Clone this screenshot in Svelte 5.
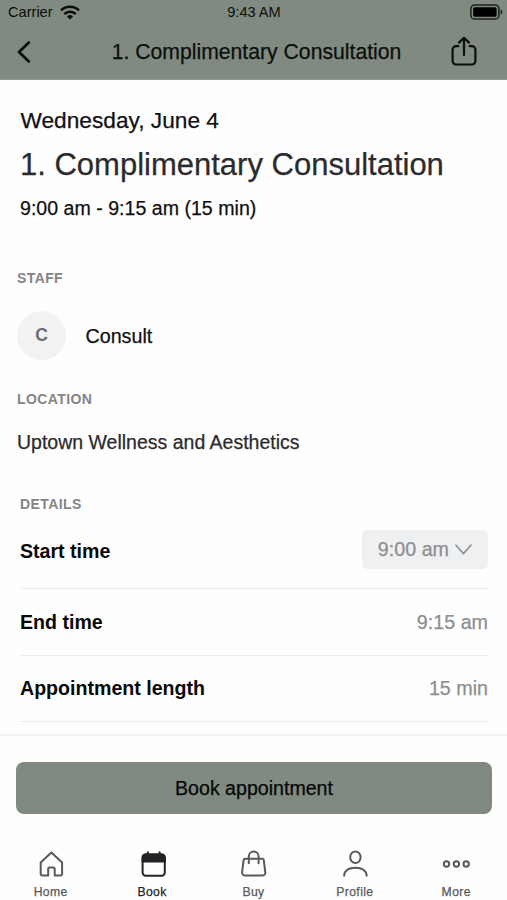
<script lang="ts">
  interface Tab {
    id: string;
    label: string;
  }

  const service = '1. Complimentary Consultation';

  const tabs: Tab[] = [
    { id: 'home', label: 'Home' },
    { id: 'book', label: 'Book' },
    { id: 'buy', label: 'Buy' },
    { id: 'profile', label: 'Profile' },
    { id: 'more', label: 'More' }
  ];

  let active = $state('book');
</script>

<div class="screen">
  <header>
    <div class="status">
      <div class="carrier">
        <span>Carrier</span>
        <svg width="20" height="15" viewBox="0 0 20 15" fill="none" stroke="#0b0f0b" stroke-width="2.5">
          <path d="M1 5.3a13 13 0 0 1 18 0"/><path d="M4.3 9a8.3 8.3 0 0 1 11.4 0"/>
          <path d="M10 14.4 7 11.5a4.3 4.3 0 0 1 6 0Z" fill="#0b0f0b" stroke="none"/>
        </svg>
      </div>
      <span class="clock">9:43 AM</span>
      <svg class="battery" width="33" height="16" viewBox="0 0 33 16" fill="none">
        <rect x="0.9" y="0.9" width="28" height="14.2" rx="3.6" stroke="#1c211c" stroke-width="1.5"/>
        <rect x="3.2" y="3.2" width="23.4" height="9.6" rx="1.6" fill="#000"/>
        <path d="M30.6 5.4c2.3.7 2.3 4.5 0 5.2Z" fill="#1c211c"/>
      </svg>
    </div>
    <div class="nav">
      <button class="icon-btn" aria-label="Back">
        <svg width="16" height="24" viewBox="0 0 16 24" fill="none" stroke="#0b0f0b" stroke-width="2.8" stroke-linecap="round" stroke-linejoin="round">
          <path d="M12.8 2.4 3 12l9.800 9.400"/>
        </svg>
      </button>
      <h1>{service}</h1>
      <button class="icon-btn" aria-label="Share">
        <svg width="28" height="31" viewBox="0 0 28 31" fill="none" stroke="#0b0f0b" stroke-width="2.2" stroke-linecap="round" stroke-linejoin="round">
          <path d="M8.3 10.2H6A3.4 3.4 0 0 0 2.6 13.6v11.5A3.4 3.4 0 0 0 6 28.5h16a3.4 3.4 0 0 0 3.4-3.4V13.6A3.4 3.4 0 0 0 22 10.2h-2.3"/>
          <path d="M14 19V2M9 6.6 14 1.8l5 4.8"/>
        </svg>
      </button>
    </div>
  </header>

  <main>
    <p class="date">Wednesday, June 4</p>
    <h2>{service}</h2>
    <p class="time">9:00 am - 9:15 am (15 min)</p>

    <h3 class="staff-label">STAFF</h3>
    <div class="staff">
      <span class="avatar">C</span>
      <span class="name">Consult</span>
    </div>

    <h3 class="location-label">LOCATION</h3>
    <p class="location">Uptown Wellness and Aesthetics</p>

    <h3 class="details-label">DETAILS</h3>
    <div class="details">
      <div class="row first">
        <span class="key">Start time</span>
        <button class="picker">
          <span>9:00 am</span>
          <svg width="17" height="11" viewBox="0 0 17 11" fill="none" stroke="#8d8f90" stroke-width="1.6" stroke-linecap="round" stroke-linejoin="round">
            <path d="M1 1.2 8.4 9.6 16 1.2"/>
          </svg>
        </button>
      </div>
      <div class="row">
        <span class="key">End time</span>
        <span class="value">9:15 am</span>
      </div>
      <div class="row last">
        <span class="key">Appointment length</span>
        <span class="value">15 min</span>
      </div>
    </div>
  </main>

  <footer>
    <button class="book">Book appointment</button>
    <nav class="tabs">
      {#each tabs as tab}
        <button class="tab" class:active={active === tab.id} onclick={() => (active = tab.id)}>
          <svg width="30" height="30" viewBox="0 0 30 30" fill="none" stroke="currentColor" stroke-width="2" stroke-linecap="round" stroke-linejoin="round">
            {#if tab.id === 'home'}
              <path d="M4.7 13.5 15.400 3.600l10.700 9.900V25a1.500 1.500 0 0 1-1.500 1.500H18.700V19.700a1.200 1.200 0 0 0-1.200-1.200H13.400a1.200 1.200 0 0 0-1.200 1.200V26.500H6.200a1.500 1.500 0 0 1-1.500-1.500Z"/>
            {:else if tab.id === 'book'}
              <rect x="5.600" y="5.500" width="22.200" height="21.200" rx="3.200"/>
              <path d="M5.600 12.500V8.500a3 3 0 0 1 3-3h16.200a3 3 0 0 1 3 3v4Z" fill="currentColor"/>
              <path d="M10.800 5V3.300M22.600 5V3.300"/>
            {:else if tab.id === 'buy'}
              <path d="M7.100 9.800h17.200a1.500 1.500 0 0 1 1.500 1.300l1.500 12.300a2.900 2.900 0 0 1-2.900 3.200H7a2.900 2.900 0 0 1-2.900-3.200L5.600 11.100a1.500 1.500 0 0 1 1.500-1.300Z"/>
              <path d="M10.800 14.300V7.300a4.900 4.900 0 0 1 9.800 0v7"/>
            {:else if tab.id === 'profile'}
              <ellipse cx="15.400" cy="8.200" rx="5.200" ry="5.800"/>
              <path d="M4.100 26.700c.5-5.300 4.600-7.900 11.300-7.900s10.800 2.600 11.300 7.900"/>
            {:else}
              <circle cx="5.500" cy="15" r="2.700"/>
              <circle cx="15.400" cy="15" r="2.700"/>
              <circle cx="25.200" cy="15" r="2.700"/>
            {/if}
          </svg>
          <span>{tab.label}</span>
        </button>
      {/each}
    </nav>
  </footer>
</div>

<style>
  :global(body) {
    background: #fff;
  }

  .screen {
    width: 507px;
    height: 900px;
    display: flex;
    flex-direction: column;
    overflow: hidden;
    background: #fefefe;
    font-family: 'Liberation Sans', Arial, Helvetica, sans-serif;
    font-size: 19.7px;
    color: #111;
    -webkit-text-stroke: 0.25px currentColor;
  }

  h1, h2, h3, p {
    margin: 0;
    font-weight: 400;
    white-space: nowrap;
  }

  button {
    border: none;
    background: none;
    padding: 0;
    margin: 0;
    font: inherit;
    color: inherit;
    cursor: pointer;
  }

  svg {
    display: block;
    flex-shrink: 0;
  }

  header {
    height: 80px;
    box-sizing: border-box;
    background: #808a80;
    border-bottom: 1px solid #8f968f;
    color: #0b0f0b;
    flex-shrink: 0;
  }

  .status {
    display: grid;
    grid-template-columns: 1fr auto 1fr;
    align-items: center;
    height: 24px;
    padding: 0 4px 0 8px;
    font-size: 14.6px;
    line-height: 24px;
    -webkit-text-stroke-width: 0;
  }

  .carrier {
    display: flex;
    align-items: center;
    gap: 7px;
  }

  .clock {
    padding-right: 3px;
  }

  .battery {
    justify-self: end;
  }

  .nav {
    display: flex;
    align-items: center;
    justify-content: space-between;
    height: 55px;
    padding: 0 29px 0 16px;
  }

  .nav h1 {
    padding-left: 31px;
    font-size: 21.2px;
    line-height: 28px;
  }

  main {
    flex: 1;
    min-height: 0;
    overflow: hidden;
    padding: 26px 19px 0 17px;
  }

  .date {
    padding-left: 3.5px;
    font-size: 22.7px;
    line-height: 28px;
  }

  h2 {
    margin-top: 11px;
    padding-left: 3px;
    font-size: 31px;
    line-height: 40px;
    color: #2b2b2d;
  }

  .time {
    margin-top: 9px;
    padding-left: 3px;
    font-size: 19.6px;
    line-height: 28px;
  }

  h3 {
    font-size: 14px;
    line-height: 16px;
    font-weight: 700;
    letter-spacing: 0.4px;
    color: #858586;
    -webkit-text-stroke-width: 0;
  }

  .staff-label {
    margin-top: 48px;
  }

  .staff {
    display: flex;
    align-items: center;
    gap: 19.5px;
    margin-top: 25px;
    height: 49px;
  }

  .avatar {
    display: flex;
    align-items: center;
    justify-content: center;
    width: 49px;
    height: 49px;
    border-radius: 50%;
    background: #f1f2f4;
    color: #6b6c6e;
    font-size: 17.5px;
    font-weight: 700;
    -webkit-text-stroke-width: 0;
  }

  .name {
    padding-top: 1px;
  }

  .location-label {
    margin-top: 31px;
  }

  .location {
    margin-top: 21px;
    font-size: 19.5px;
    line-height: 28px;
    color: #2b2b2d;
  }

  .details-label {
    margin-top: 40px;
    padding-left: 3px;
  }

  .details {
    margin: 2px 0 0 3px;
  }

  .row {
    display: flex;
    align-items: center;
    justify-content: space-between;
    height: 66px;
    border-bottom: 1px solid #ececee;
  }

  .row.first {
    height: 74px;
  }

  .row.last {
    height: 65px;
  }

  .key {
    font-size: 19.6px;
    font-weight: 700;
    color: #080808;
    -webkit-text-stroke-width: 0;
  }

  .value {
    color: #8d8f90;
  }

  .picker {
    display: flex;
    align-items: center;
    gap: 6px;
    height: 39px;
    margin-bottom: 4px;
    padding: 0 16px;
    border-radius: 5px;
    background: #eff0f2;
    color: #8d8f90;
  }

  footer {
    height: 166px;
    box-sizing: border-box;
    flex-shrink: 0;
    display: flex;
    flex-direction: column;
    padding: 26px 0 0;
    border-top: 2px solid #f2f2f3;
  }

  .book {
    height: 52px;
    margin: 0 15px 0 16px;
    border-radius: 8px;
    background: #808a80;
    color: #050805;
    font-size: 19.6px;
  }

  .tabs {
    display: grid;
    grid-template-columns: repeat(5, 1fr);
    margin-top: 35px;
  }

  .tab {
    display: flex;
    flex-direction: column;
    align-items: center;
    gap: 5px;
    color: #59595b;
    font-size: 12.2px;
    line-height: 16px;
    letter-spacing: 0.4px;
  }

  .tab.active {
    color: #222326;
  }
</style>
